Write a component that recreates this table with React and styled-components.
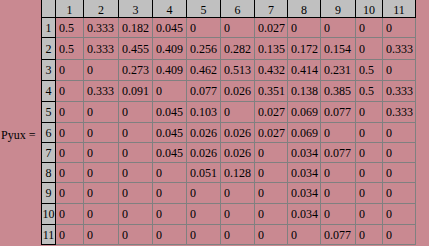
import React from "react";
import styled, { createGlobalStyle } from "styled-components";

const Global = createGlobalStyle`
  html, body {
    margin: 0;
    padding: 0;
    background: #c98991;
  }
  body {
    font-family: "Liberation Serif", "Times New Roman", serif;
    font-size: 12px;
    color: #000;
  }
`;

const Page = styled.div`
  display: flex;
  align-items: flex-start;
  width: 429px;
  height: 246px;
  background: #c98991;
`;

const Label = styled.div`
  width: 41px;
  box-sizing: border-box;
  align-self: center;
  padding: 24px 0 0 1px;
  white-space: nowrap;
`;

const Grid = styled.div`
  display: grid;
  grid-template-columns: 14px 28px 35px 34px 34px 34px 34px 33px 33px 35px 27px 33px;
  grid-template-rows: 18px 20px 22px 21px 21px 21px 20px 20px 20px 21px 21px 20px;
  border-left: 1px solid #000;
`;

const Cell = styled.div`
  box-sizing: border-box;
  display: flex;
  align-items: center;
  white-space: nowrap;
  overflow: visible;
  border-right: 1px solid ${(p) => (p.$kind === "body" ? "#808080" : "#000")};
  border-bottom: 1px solid ${(p) => (p.$kind === "body" ? "#808080" : "#000")};
  background: ${(p) => (p.$kind === "body" ? "#c98991" : "#c0c0c0")};
  justify-content: ${(p) => (p.$kind === "body" ? "flex-start" : "center")};
  padding-left: ${(p) => (p.$kind === "body" ? "3px" : "0")};
  padding-top: ${(p) => (p.$kind === "head" || p.$kind === "corner" ? "3px" : "0")};
  line-height: 14px;
`;

const rows = [
  ["0.5", "0.333", "0.182", "0.045", "0", "0", "0.027", "0", "0", "0", "0"],
  ["0.5", "0.333", "0.455", "0.409", "0.256", "0.282", "0.135", "0.172", "0.154", "0", "0.333"],
  ["0", "0", "0.273", "0.409", "0.462", "0.513", "0.432", "0.414", "0.231", "0.5", "0"],
  ["0", "0.333", "0.091", "0", "0.077", "0.026", "0.351", "0.138", "0.385", "0.5", "0.333"],
  ["0", "0", "0", "0.045", "0.103", "0", "0.027", "0.069", "0.077", "0", "0.333"],
  ["0", "0", "0", "0.045", "0.026", "0.026", "0.027", "0.069", "0", "0", "0"],
  ["0", "0", "0", "0.045", "0.026", "0.026", "0", "0.034", "0.077", "0", "0"],
  ["0", "0", "0", "0", "0.051", "0.128", "0", "0.034", "0", "0", "0"],
  ["0", "0", "0", "0", "0", "0", "0", "0.034", "0", "0", "0"],
  ["0", "0", "0", "0", "0", "0", "0", "0.034", "0", "0", "0"],
  ["0", "0", "0", "0", "0", "0", "0", "0", "0.077", "0", "0"],
];

export default function App() {
  return (
    <>
      <Global />
      <Page>
        <Label>Pyux =</Label>
        <Grid>
          <Cell $kind="corner" />
          {rows[0].map((_, i) => (
            <Cell key={"h" + i} $kind="head">
              {i + 1}
            </Cell>
          ))}
          {rows.map((row, r) => (
            <React.Fragment key={r}>
              <Cell $kind="side">{r + 1}</Cell>
              {row.map((v, c) => (
                <Cell key={c} $kind="body">
                  {v}
                </Cell>
              ))}
            </React.Fragment>
          ))}
        </Grid>
      </Page>
    </>
  );
}
